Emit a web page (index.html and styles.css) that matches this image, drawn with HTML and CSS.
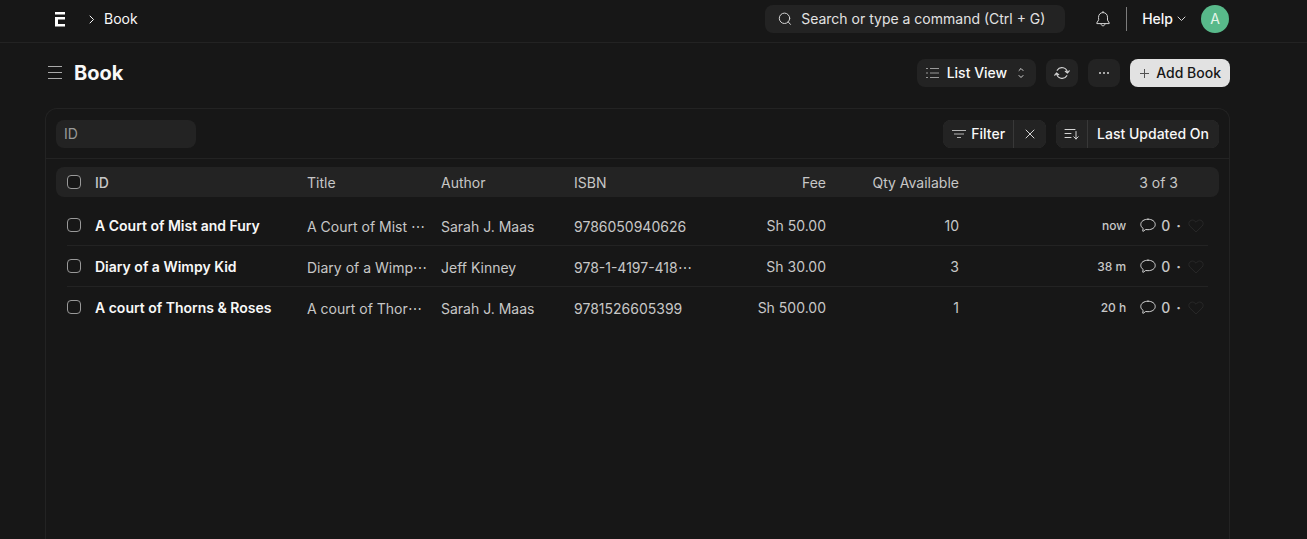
FILE: index.html
```html
<!DOCTYPE html>
<html lang="en">
<head>
<meta charset="utf-8">
<title>Book</title>
<link rel="stylesheet" href="styles.css">
</head>
<body>
<svg class="sprite" aria-hidden="true">
  <symbol id="comment" viewBox="0 0 16 16"><path d="M8 1.200c4.200 0 7.200 2.200 7.200 5.300s-3 5.200-7.200 5.200c-.8 0-1.600-.1-2.300-.2L3.200 13.300c-.3.100-.6-.1-.5-.4l.5-2.400C1.700 9.500.8 8.100.8 6.500.8 3.400 3.800 1.200 8 1.200z"/></symbol>
  <symbol id="heart" viewBox="0 0 16 16"><path d="M8 14 1.900 8.100C.5 6.700.5 4.400 1.900 3.100 3.300 1.700 5.500 1.700 6.900 3.100L8 4.200l1.100-1.100c1.400-1.400 3.600-1.400 5 0 1.400 1.300 1.400 3.600 0 5z"/></symbol>
</svg>
<header class="navbar">
  <nav class="crumbs">
    <a class="logo" href="#" aria-label="Home"><svg width="12" height="16" viewBox="0 0 12 16"><path d="M1 1h10v2.500H1zM1 6h10v2.500H4V13h7v2.500H1z"/></svg></a>
    <svg class="stroke crumb-arrow" width="6" height="10" viewBox="0 0 6 10"><path d="m1 2 3.500 3.500L1 9"/></svg>
    <a class="crumb" href="#">Book</a>
  </nav>
  <div class="nav-tools">
    <label class="search">
      <svg class="stroke" width="16" height="16" viewBox="0 0 16 16"><circle cx="7.500" cy="7.300" r="5.200"/><path d="m11.300 11 2.200 2.400"/></svg>
      <input type="text" placeholder="Search or type a command (Ctrl + G)" aria-label="Search">
    </label>
    <button class="icon-button bell" aria-label="Notifications"><svg class="stroke" width="16" height="18" viewBox="0 0 16 18"><path d="M8 1.500v1M3.500 7.200C3.500 4.500 5.400 2.600 8 2.600s4.500 1.900 4.500 4.600v2.900l1.800 3c.1.300 0 .5-.3.500H2c-.3 0-.4-.2-.3-.5l1.800-3zM6 13.800c0 1.200.8 2 2 2s2-.8 2-2"/></svg></button>
    <span class="divider"></span>
    <button class="help">Help <svg class="stroke" width="9" height="6" viewBox="0 0 9 6"><path d="M1 1l3.500 3.500L8 1"/></svg></button>
    <button class="avatar" aria-label="Account">A</button>
  </div>
</header>
<section class="page-head">
  <div class="title-group">
    <button class="icon-button" aria-label="Toggle sidebar"><svg class="menu-icon" width="16" height="16" viewBox="0 0 16 16"><path d="M1 1.500h14M1 7.500h14M1 13.500h14"/></svg></button>
    <h1>Book</h1>
  </div>
  <div class="actions">
    <button class="btn view"><svg class="dim" width="14" height="12" viewBox="0 0 14 12"><path d="M0 1.500h2M4 1.500h9M0 6h2M4 6h9M0 10.500h2M4 10.500h9"/></svg>List View<svg class="stroke sort-arrows" width="6" height="12" viewBox="0 0 6 12"><path d="m1 3.500 2-2 2 2M1 8.500l2 2 2-2"/></svg></button>
    <button class="btn square" aria-label="Refresh"><svg class="stroke refresh" width="16" height="16" viewBox="0 0 16 16"><path d="M3.200 5.300a5.500 5.500 0 0 1 10.200 2.400M12.800 10.700A5.500 5.500 0 0 1 2.600 8.300M11.300 6.300l2.200 1.700 1.700-2.200M.8 10.200 2.500 8l2.200 1.700"/></svg></button>
    <button class="btn square" aria-label="More"><svg class="dots" width="12" height="4" viewBox="0 0 12 4"><circle cx="2" cy="2" r="1"/><circle cx="6" cy="2" r="1"/><circle cx="10" cy="2" r="1"/></svg></button>
    <button class="btn primary"><svg width="9" height="9" viewBox="0 0 9 9"><path d="M4.500 0v9M0 4.500h9"/></svg>Add Book</button>
  </div>
</section>
<main class="frame">
  <div class="filters">
    <input class="id-filter" type="text" placeholder="ID" aria-label="ID">
    <div class="filter-tools">
      <div class="group">
        <button class="btn filter"><svg class="filter-icon" width="14" height="10" viewBox="0 0 14 10"><path d="M0 1.500h14M2 5h10M5 8.500h4"/></svg>Filter</button>
        <button class="btn clear" aria-label="Clear filters"><svg class="stroke" width="10" height="10" viewBox="0 0 10 10"><path d="m1 1 8 8M9 1 1 9"/></svg></button>
      </div>
      <div class="group">
        <button class="btn order" aria-label="Sort direction"><svg class="stroke" width="15" height="12" viewBox="0 0 15 12"><path d="M1 1.500h10M1 5.500h6M1 9.500h6M12 3.500V11M9.800 8.800 12 11l2.200-2.200"/></svg></button>
        <button class="btn sort">Last Updated On</button>
      </div>
    </div>
  </div>
  <table class="list">
    <colgroup><col class="c-check"><col class="c-id"><col class="c-title"><col class="c-field"><col class="c-field"><col class="c-field"><col class="c-field"><col></colgroup>
    <thead>
      <tr><th><input type="checkbox" aria-label="Select all"></th><th class="id">ID</th><th>Title</th><th>Author</th><th>ISBN</th><th class="num">Fee</th><th class="num">Qty Available</th><th class="count">3 of 3</th></tr>
    </thead>
    <tbody>
      <tr><td><input type="checkbox" aria-label="Select A Court of Mist and Fury"></td><td><a class="name" href="#">A Court of Mist and Fury</a></td><td class="text">A Court of Mist ⋯</td><td class="text">Sarah J. Maas</td><td class="text">9786050940626</td><td class="num">Sh 50.00</td><td class="num">10</td><td><div class="activity"><span class="when">now</span><svg class="stroke" width="16" height="16"><use href="#comment"/></svg><span class="comments">0</span><span class="dot">·</span><button class="icon-button" aria-label="Like"><svg class="heart" width="16" height="16"><use href="#heart"/></svg></button></div></td></tr>
      <tr><td><input type="checkbox" aria-label="Select Diary of a Wimpy Kid"></td><td><a class="name" href="#">Diary of a Wimpy Kid</a></td><td class="text">Diary of a Wimp⋯</td><td class="text">Jeff Kinney</td><td class="text">978-1-4197-418⋯</td><td class="num">Sh 30.00</td><td class="num">3</td><td><div class="activity"><span class="when">38 m</span><svg class="stroke" width="16" height="16"><use href="#comment"/></svg><span class="comments">0</span><span class="dot">·</span><button class="icon-button" aria-label="Like"><svg class="heart" width="16" height="16"><use href="#heart"/></svg></button></div></td></tr>
      <tr><td><input type="checkbox" aria-label="Select A court of Thorns &amp; Roses"></td><td><a class="name" href="#">A court of Thorns &amp; Roses</a></td><td class="text">A court of Thor⋯</td><td class="text">Sarah J. Maas</td><td class="text">9781526605399</td><td class="num">Sh 500.00</td><td class="num">1</td><td><div class="activity"><span class="when">20 h</span><svg class="stroke" width="16" height="16"><use href="#comment"/></svg><span class="comments">0</span><span class="dot">·</span><button class="icon-button" aria-label="Like"><svg class="heart" width="16" height="16"><use href="#heart"/></svg></button></div></td></tr>
    </tbody>
  </table>
</main>
</body>
</html>
```
FILE: styles.css
```css
* { box-sizing: border-box; }
body {
  margin: 0;
  min-height: 100vh;
  display: flex;
  flex-direction: column;
  background: #171717;
  color: #f8f8f8;
  font: 14px/20px Inter, sans-serif;
}
button, input { font: inherit; color: inherit; border: 0; margin: 0; padding: 0; background: none; }
a { color: inherit; text-decoration: none; }
svg { display: block; flex: none; }
.sprite { position: absolute; width: 0; height: 0; }
.stroke { fill: none; stroke: #d4d4d4; stroke-width: 1; stroke-linecap: round; stroke-linejoin: round; }
.dim { fill: none; stroke: #999; }
.icon-button { display: flex; align-items: center; justify-content: center; }

.navbar {
  display: flex;
  justify-content: space-between;
  align-items: center;
  height: 43px;
  padding: 0 78px 4px 54px;
  border-bottom: 1px solid #232323;
}
.crumbs { display: flex; align-items: center; }
.logo { fill: #fff; }
.crumb-arrow { margin: 0 9px 0 23px; stroke: #f8f8f8; }
.nav-tools { display: flex; align-items: center; }
.search {
  display: flex;
  align-items: center;
  gap: 8px;
  width: 300px;
  height: 28px;
  padding: 0 12px;
  border-radius: 8px;
  background: #232323;
}
.search input { flex: 1; min-width: 0; outline: 0; }
.search input::placeholder { color: #e2e2e2; opacity: 1; }
.bell { margin: 0 15px 0 30px; }
.divider { width: 1px; height: 24px; background: #7c7c7c; }
.help { display: flex; align-items: center; gap: 4px; margin: 0 15px; font-weight: 500; }
.nav-tools .avatar { width: 28px; height: 28px; border-radius: 50%; background: #58b98a; color: #e4f5e9; }

.page-head { display: flex; justify-content: space-between; align-items: center; height: 60px; padding: 0 77px 0 47px; }
.title-group { display: flex; align-items: center; gap: 11px; }
.menu-icon { fill: none; stroke: #aaa; }
h1 { margin: 0; font-size: 20px; line-height: 28px; font-weight: 700; }
.actions { display: flex; gap: 10px; }
.btn { display: flex; align-items: center; justify-content: center; height: 28px; border-radius: 8px; background: #232323; font-weight: 500; }
.view { gap: 7px; padding: 0 12px 0 9px; }
.sort-arrows { margin-left: 4px; }
.refresh { stroke-width: 1.200; }
.square { width: 32px; }
.dots { fill: #d4d4d4; }
.primary { gap: 7px; padding: 0 9px 0 10px; background: #e2e2e2; color: #171717; }
.primary svg { stroke: #525252; }

.frame { flex: 1; margin: 5px 77px 0 45px; border: 1px solid #232323; border-bottom: 0; border-radius: 12px 12px 0 0; }
.filters { display: flex; justify-content: space-between; align-items: center; height: 50px; padding: 0 10px; border-bottom: 1px solid #232323; }
.id-filter { width: 140px; height: 28px; padding: 0 8px; border-radius: 8px; background: #232323; outline: 0; }
.id-filter::placeholder { color: #999; opacity: 1; }
.filter-tools { display: flex; gap: 10px; }
.group { display: flex; gap: 1px; overflow: hidden; border-radius: 8px; background: #383838; }
.group .btn { border-radius: 0; }
.filter { gap: 5px; padding: 0 8px 0 9px; }
.filter-icon { fill: none; stroke: #b4b4b4; }
.clear { width: 32px; }
.order { width: 31px; }
.sort { padding: 0 10px 0 9px; }

.list { width: calc(100% - 20px); margin: 8px 10px; table-layout: fixed; border-spacing: 0; color: #c7c7c7; }
.c-check { width: 39px; }
.c-id { width: 212px; }
.c-title { width: 134px; }
.c-field { width: 133px; }
th, td { padding: 0; text-align: left; font-weight: 400; white-space: nowrap; }
th { height: 30px; background: #232323; padding-top: 2px; }
th:first-child { border-radius: 8px 0 0 8px; padding-top: 0; }
th:last-child { border-radius: 0 8px 8px 0; }
th.id { font-weight: 500; }
thead::after { content: ""; display: block; height: 8px; }
td { height: 41px; }
td:first-child { padding-bottom: 2px; }
tbody tr { background: linear-gradient(#232323, #232323) center bottom / calc(100% - 22px) 1px no-repeat; }
tbody tr:last-child { background: none; }
td.text { padding-top: 2px; }
.list .num { text-align: right; padding-right: 14px; }
.list .count { text-align: right; padding-right: 41px; }
.name { color: #f8f8f8; font-weight: 600; }
.list input { display: block; appearance: none; width: 14px; height: 14px; margin-left: 11px; border: 1px solid #999; border-radius: 4px; background: #171717; }
.list input:checked { background: #999; }
.activity { display: flex; align-items: center; justify-content: flex-end; padding-right: 15px; }
.when { margin-right: 14px; font-size: 12px; font-weight: 500; }
.comments { margin-left: 5px; font-weight: 500; }
.dot { margin: 0 7px 0 6px; font-weight: 700; }
.heart { fill: none; stroke: #282828; }
```
